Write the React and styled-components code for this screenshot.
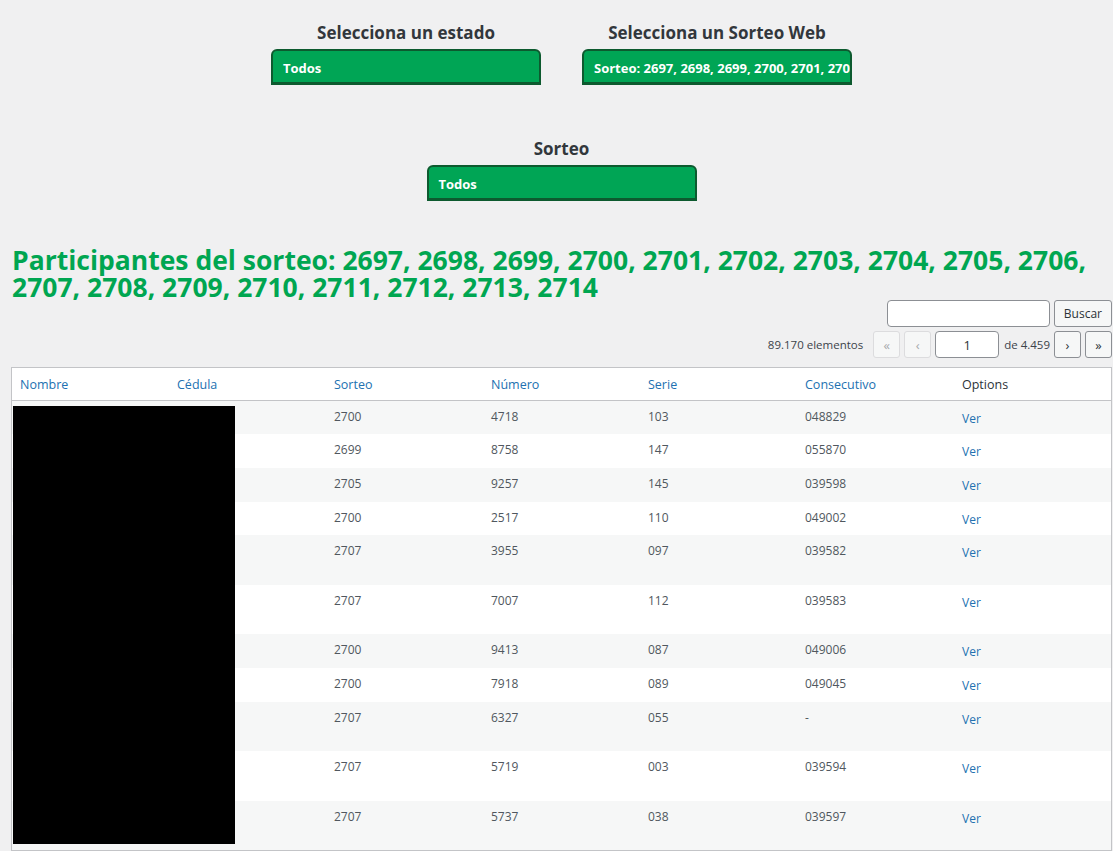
import React from 'react'
import styled, { createGlobalStyle } from 'styled-components'

const GlobalStyle = createGlobalStyle`
  body {
    margin: 0;
    background: #f0f0f1;
    font-family: 'Open Sans', 'Noto Sans', sans-serif;
    color: #3c434a;
  }
`

const rows = [
  { sorteo: '2700', numero: '4718', serie: '103', cons: '048829' },
  { sorteo: '2699', numero: '8758', serie: '147', cons: '055870' },
  { sorteo: '2705', numero: '9257', serie: '145', cons: '039598' },
  { sorteo: '2700', numero: '2517', serie: '110', cons: '049002' },
  { sorteo: '2707', numero: '3955', serie: '097', cons: '039582', tall: true },
  { sorteo: '2707', numero: '7007', serie: '112', cons: '039583', tall: true },
  { sorteo: '2700', numero: '9413', serie: '087', cons: '049006' },
  { sorteo: '2700', numero: '7918', serie: '089', cons: '049045' },
  { sorteo: '2707', numero: '6327', serie: '055', cons: '-', tall: true },
  { sorteo: '2707', numero: '5719', serie: '003', cons: '039594', tall: true },
  { sorteo: '2707', numero: '5737', serie: '038', cons: '039597', tall: true },
]

function Filter({ label, value }) {
  return (
    <FilterBox>
      <FilterLabel>{label}</FilterLabel>
      <Select>{value}</Select>
    </FilterBox>
  )
}

export default function App() {
  return (
    <Page>
      <GlobalStyle />
      <Filters>
        <Filter label="Selecciona un estado" value="Todos" />
        <Filter label="Selecciona un Sorteo Web" value="Sorteo: 2697, 2698, 2699, 2700, 2701, 2702, 2703" />
      </Filters>
      <Filters $single>
        <Filter label="Sorteo" value="Todos" />
      </Filters>

      <Title>
        Participantes del sorteo: 2697, 2698, 2699, 2700, 2701, 2702, 2703, 2704, 2705, 2706, 2707, 2708, 2709, 2710, 2711, 2712, 2713, 2714
      </Title>

      <SearchRow>
        <SearchInput />
        <Button>Buscar</Button>
      </SearchRow>
      <PagerRow>
        <Count>89.170 elementos</Count>
        <PageBtn disabled>«</PageBtn>
        <PageBtn disabled>‹</PageBtn>
        <PageInput defaultValue="1" />
        <Count $total>de 4.459</Count>
        <PageBtn>›</PageBtn>
        <PageBtn>»</PageBtn>
      </PagerRow>

      <TableWrap>
        <Table>
          <thead>
            <tr>
              <Th>Nombre</Th>
              <Th>Cédula</Th>
              <Th>Sorteo</Th>
              <Th>Número</Th>
              <Th>Serie</Th>
              <Th>Consecutivo</Th>
              <Th $plain>Options</Th>
            </tr>
          </thead>
          <tbody>
            {rows.map((r, i) => (
              <Tr key={i} $striped={i % 2 === 0} $tall={r.tall}>
                <Td></Td>
                <Td></Td>
                <Td>{r.sorteo}</Td>
                <Td>{r.numero}</Td>
                <Td>{r.serie}</Td>
                <Td>{r.cons}</Td>
                <Td><Link href="#">Ver</Link></Td>
              </Tr>
            ))}
          </tbody>
        </Table>
        <Redacted />
      </TableWrap>
    </Page>
  )
}

const Page = styled.div`
  padding: 0 1px 0 11px;
  height: 851px;
  overflow: hidden;
`

const Filters = styled.div`
  display: flex;
  justify-content: center;
  gap: 41px;
  padding-top: ${p => (p.$single ? '52px' : '21px')};
`

const FilterBox = styled.div`
  width: 270px;
  display: flex;
  flex-direction: column;
  align-items: center;
`

const FilterLabel = styled.div`
  font-size: 17px;
  font-weight: 700;
  color: #32373c;
  line-height: 24px;
  margin-bottom: 4px;
`

const Select = styled.div`
  box-sizing: border-box;
  width: 270px;
  height: 36px;
  background: #00a555;
  border: 2px solid #0d5a2f;
  border-bottom-width: 3px;
  border-radius: 6px 6px 0 0;
  color: #fff;
  font-weight: 700;
  font-size: 13px;
  line-height: 34px;
  padding: 0 10px;
  white-space: nowrap;
  overflow: hidden;
`

const Title = styled.h1`
  margin: 46px 0 0 1px;
  color: #00a651;
  font-size: 26.5px;
  font-weight: 700;
  line-height: 27px;
`

const SearchRow = styled.div`
  display: flex;
  justify-content: flex-end;
  gap: 4px;
  margin-top: -1px;
`

const SearchInput = styled.input`
  box-sizing: border-box;
  width: 163px;
  height: 27px;
  border: 1px solid #8c8f94;
  border-radius: 4px;
  background: #fff;
`

const Button = styled.button`
  box-sizing: border-box;
  height: 27px;
  padding: 0 9px;
  background: #f6f7f7;
  border: 1px solid #8c8f94;
  border-radius: 3px;
  font-family: inherit;
  font-size: 12px;
  color: #2c3338;
`

const PagerRow = styled.div`
  display: flex;
  justify-content: flex-end;
  align-items: center;
  gap: 4px;
  margin-top: 4px;
`

const Count = styled.span`
  font-size: 11.5px;
  color: #3c434a;
  margin: ${p => (p.$total ? '0 0 0 1px' : '0 6px 0 0')};
`

const PageBtn = styled.button`
  box-sizing: border-box;
  width: 27px;
  height: 27px;
  padding: 0;
  background: #f6f7f7;
  border: 1px solid ${p => (p.disabled ? '#dcdcde' : '#8c8f94')};
  border-radius: 3px;
  color: ${p => (p.disabled ? '#a7aaad' : '#2c3338')};
  font-family: inherit;
  font-size: 13px;
`

const PageInput = styled.input`
  box-sizing: border-box;
  width: 64px;
  height: 27px;
  border: 1px solid #8c8f94;
  border-radius: 4px;
  text-align: center;
  font-family: inherit;
  font-size: 13px;
  color: #2c3338;
`

const TableWrap = styled.div`
  position: relative;
  margin-top: 9px;
  border: 1px solid #c3c4c7;
  background: #fff;
`

const Table = styled.table`
  width: 100%;
  border-collapse: collapse;
  table-layout: fixed;
  font-size: 12px;
`

const Th = styled.th`
  text-align: left;
  font-weight: 400;
  font-size: 12.5px;
  color: ${p => (p.$plain ? '#2c3338' : '#2271b1')};
  height: 32px;
  padding: 0 8px;
  border-bottom: 1px solid #c3c4c7;
`

const Tr = styled.tr`
  background: ${p => (p.$striped ? '#f6f7f7' : '#fff')};
  height: ${p => (p.$tall ? '49.5px' : '33.7px')};
`

const Td = styled.td`
  vertical-align: top;
  padding: 7px 8px 0;
  color: #50575e;
`

const Link = styled.a`
  display: inline-block;
  margin-top: 2px;
  color: #2271b1;
  text-decoration: none;
`

const Redacted = styled.div`
  position: absolute;
  left: 1px;
  top: 38px;
  width: 222px;
  height: 438px;
  background: #000;
`
